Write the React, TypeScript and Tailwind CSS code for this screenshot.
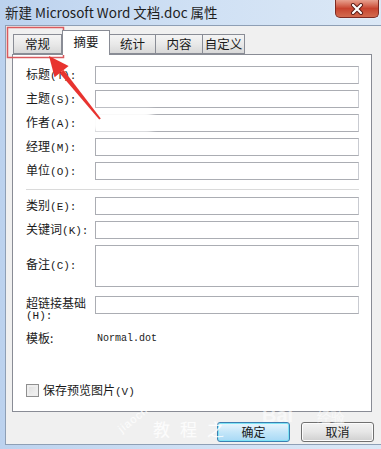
import React from "react";

const CJK = "font-['Noto_Sans_CJK_SC','Microsoft_YaHei',sans-serif]";

type Row = { cn: string; key?: string; tall?: boolean };

const TOP_ROWS: Row[] = [
  { cn: "标题", key: "T" },
  { cn: "主题", key: "S" },
  { cn: "作者", key: "A" },
  { cn: "经理", key: "M" },
  { cn: "单位", key: "O" },
];

const TABS = ["常规", "摘要", "统计", "内容", "自定义"];
const TAB_W = ["w-[49px]", "w-[48px]", "w-[47px]", "w-[48px]", "w-[43px]"];

function Label({ row }: { row: Row }) {
  return (
    <span className="text-[12px] leading-[12px] text-[#1a1a1a]">
      {row.cn}
      {row.key && (
        <span className="font-['Liberation_Mono',monospace] text-[11px]">
          ({row.key}):
        </span>
      )}
    </span>
  );
}

function Field({ row }: { row: Row }) {
  return (
    <div className="flex items-start">
      <div className={`w-[69px] shrink-0 ${row.tall ? "pt-[5px]" : "h-[18px] flex items-center"}`}>
        <Label row={row} />
      </div>
      <div
        className={`w-[264px] bg-white border border-[#abadb3] border-r-[#c9cbd1] ${
          row.tall ? "h-[42px]" : "h-[18px]"
        }`}
      />
    </div>
  );
}

function Tab({ name, i }: { name: string; i: number }) {
  const active = i === 1;
  return (
    <div
      className={`${TAB_W[i]} flex items-center justify-center border border-[#898c95] text-[12.5px] text-[#1a1a1a] ${
        active
          ? "h-[25px] bg-white border-b-0 -mb-px z-10 pb-[2px]"
          : "h-[20px] bg-gradient-to-b from-[#f4f4f4] via-[#e9e9e9] to-[#d8d8d8] -ml-px first:ml-0"
      }`}
    >
      {name}
    </div>
  );
}

function CloseButton() {
  return (
    <div className="w-[44px] h-[18px] rounded-b-[5px] border border-t-0 border-[#7d2a22] bg-gradient-to-b from-[#e7a08f] via-[#c7432f] to-[#d26a4e] flex items-center justify-center shadow-[0_0_2px_#ffffff]">
      <svg width="14" height="12" viewBox="0 0 14 12">
        <path d="M3 2 L11 10 M11 2 L3 10" stroke="#5a1a14" strokeWidth="4" strokeLinecap="round" />
        <path d="M3 2 L11 10 M11 2 L3 10" stroke="#ffffff" strokeWidth="2.2" strokeLinecap="round" />
      </svg>
    </div>
  );
}

function Button({ label, primary }: { label: string; primary?: boolean }) {
  return (
    <div
      className={`w-[73px] h-[20px] rounded-[3px] border flex items-center justify-center text-[12px] text-[#1a1a1a] ${
        primary
          ? "border-[#3c7fb1] bg-gradient-to-b from-[#eaf6fd] via-[#c4e6f9] to-[#a7d9f5] shadow-[inset_0_0_0_1px_#7ee3f5]"
          : "border-[#707070] bg-gradient-to-b from-[#f2f2f2] via-[#e6e6e6] to-[#cfcfcf] shadow-[inset_0_0_0_1px_#fcfcfc]"
      }`}
    >
      {label}
    </div>
  );
}

export default function App() {
  const midRows: Row[] = [
    { cn: "类别", key: "E" },
    { cn: "关键词", key: "K" },
  ];

  return (
    <div className={`relative w-[381px] h-[449px] overflow-hidden bg-gradient-to-r from-[#bcd2ee] via-[#cfe0f4] to-[#dbe8f6] ${CJK}`}>
      {/* title bar */}
      <div className="h-[25px] flex items-start justify-between pl-[5px] pr-[2px]">
        <span className="pt-[4px] text-[13.5px] leading-[16px] text-[#1e1e1e]">
          新建 Microsoft Word 文档.doc 属性
        </span>
        <CloseButton />
      </div>

      {/* dialog body */}
      <div className="ml-[5px] h-[420px] bg-[#f0f0f0] border-l border-t border-b border-[#8e9fb5] pt-[4px]">
        <div className="flex items-end pl-[7px]">
          {TABS.map((t, i) => (
            <Tab key={t} name={t} i={i} />
          ))}
        </div>

        <div className="ml-[6px] w-[360px] h-[358px] bg-white border border-[#898c95] pt-[11px] pl-[13px] flex flex-col">
          <div className="flex flex-col gap-[6px]">
            {TOP_ROWS.map((r) => (
              <Field key={r.cn} row={r} />
            ))}
          </div>

          <div className="w-[333px] h-px bg-[#dadada] mt-[9px] mb-[7px]" />

          <div className="flex flex-col gap-[6px]">
            {midRows.map((r) => (
              <Field key={r.cn} row={r} />
            ))}
            <Field row={{ cn: "备注", key: "C", tall: true }} />
          </div>

          <div className="flex items-start mt-[9px]">
            <div className="w-[69px] shrink-0 text-[12px] leading-[11px] text-[#1a1a1a] pt-[1px]">
              超链接基础
              <br />
              <span className="font-['Liberation_Mono',monospace] text-[11px]">(H):</span>
            </div>
            <div className="w-[264px] h-[18px] bg-white border border-[#abadb3] border-r-[#c9cbd1]" />
          </div>

          <div className="flex items-center mt-[8px] h-[16px]">
            <span className="w-[71px] shrink-0 text-[12px] text-[#1a1a1a]">模板:</span>
            <span className="font-['Liberation_Mono',monospace] text-[10px] text-[#1a1a1a]">Normal.dot</span>
          </div>

          <div className="mt-auto mb-[11px] flex items-center gap-[4px]">
            <div className="w-[13px] h-[13px] border border-[#8f8f8f] bg-gradient-to-br from-[#dcdcdc] to-[#f6f6f6] shadow-[inset_0_0_0_2px_#eeeeee]" />
            <span className="text-[12px] text-[#1a1a1a]">
              保存预览图片
              <span className="font-['Liberation_Mono',monospace] text-[11px]">(V)</span>
            </span>
          </div>
        </div>

        <div className="flex justify-end gap-[11px] pr-[2px] mt-[10px] w-[370px]">
          <Button label="确定" primary />
          <Button label="取消" />
        </div>
      </div>

      {/* blurred author name */}
      <div className="absolute left-[90px] top-[110px] w-[62px] h-[22px] bg-white blur-[3px]" />

      {/* watermarks */}
      <span className="absolute left-[116px] top-[414px] -rotate-[38deg] text-[11px] leading-[11px] text-white/80 font-['Liberation_Sans',sans-serif] tracking-[1px] pointer-events-none">
        jiaoch
      </span>
      <span className="absolute left-[153px] top-[416px] text-[17px] tracking-[10px] text-white/80 pointer-events-none">
        教程之
      </span>
      <span className="absolute left-[262px] top-[400px] text-[20px] font-bold text-white/60 font-['Liberation_Sans',sans-serif] pointer-events-none">
        Bai
        <span className="text-[14px] font-normal pl-[24px]">经验</span>
      </span>

      {/* red annotation */}
      <svg className="absolute left-0 top-0 pointer-events-none" width="381" height="449" viewBox="0 0 381 449">
        <rect x="7.5" y="27.5" width="56" height="30" fill="none" stroke="#d95a5e" strokeWidth="1.5" />
        <polygon points="49,56 68.6,65.9 54.6,77.3" fill="#e8332f" />
        <polygon points="63.6,70 100.8,118.4 99.2,119.6 59.7,73.2" fill="#e8332f" />
      </svg>
    </div>
  );
}
